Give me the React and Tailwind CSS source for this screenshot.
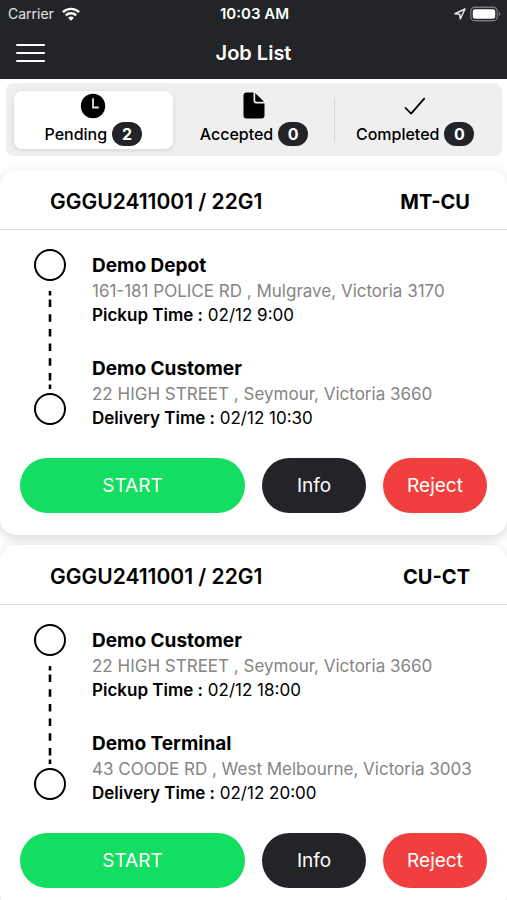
import React, { useState } from "react";

const jobs = [
  {
    container: "GGGU2411001 / 22G1",
    leg: "MT-CU",
    from: { name: "Demo Depot", address: "161-181 POLICE RD , Mulgrave, Victoria 3170", time: "02/12 9:00" },
    to: { name: "Demo Customer", address: "22 HIGH STREET , Seymour, Victoria 3660", time: "02/12 10:30" },
  },
  {
    container: "GGGU2411001 / 22G1",
    leg: "CU-CT",
    from: { name: "Demo Customer", address: "22 HIGH STREET , Seymour, Victoria 3660", time: "02/12 18:00" },
    to: { name: "Demo Terminal", address: "43 COODE RD , West Melbourne, Victoria 3003", time: "02/12 20:00" },
  },
];

function WifiIcon() {
  return (
    <svg width="18" height="14" viewBox="0 0 18 14" fill="none" stroke="white" strokeWidth="2.4" aria-hidden="true">
      <path d="M0.9 5.2a11.6 11.6 0 0 1 16.2 0" />
      <path d="M3.8 8.3a7.5 7.5 0 0 1 10.4 0" />
      <path d="M6.1 10.8a4.2 4.2 0 0 1 5.8 0L9 13.7Z" fill="white" stroke="none" />
    </svg>
  );
}

function LocationIcon() {
  return (
    <svg width="12" height="12" viewBox="0 0 12 12" fill="none" stroke="#e8e8e8" strokeWidth="1.5" strokeLinejoin="round" aria-hidden="true">
      <path d="M11 1 1 5.7l4.7.6.6 4.7Z" />
    </svg>
  );
}

function BatteryIcon() {
  return (
    <svg width="31" height="16" viewBox="0 0 31 16" aria-hidden="true">
      <rect x="0.75" y="1.25" width="26.5" height="13.5" rx="4" fill="none" stroke="#77797b" strokeWidth="1.3" />
      <rect x="2.8" y="3.2" width="22.4" height="9.6" rx="2.2" fill="white" />
      <path d="M28.8 5.6c2 .9 2 3.9 0 4.8Z" fill="#77797b" />
    </svg>
  );
}

function ClockIcon() {
  return (
    <svg width="26" height="26" viewBox="0 0 26 26" aria-hidden="true">
      <circle cx="13" cy="13" r="12.2" fill="black" />
      <path d="M13 5.2v9.300h5.8" fill="none" stroke="#e4e4e4" strokeWidth="1.8" />
    </svg>
  );
}

function DocumentIcon() {
  return (
    <svg width="22" height="27" viewBox="0 0 22 27" aria-hidden="true">
      <path d="M3.5.5H10.5V8.5a3 3 0 0 0 3 3H21.5V23.500a3 3 0 0 1-3 3h-15a3 3 0 0 1-3-3v-20a3 3 0 0 1 3-3Z" fill="black" />
      <path d="M12.200.9 21 9.800h-7.300a1.500 1.500 0 0 1-1.500-1.500Z" fill="black" />
    </svg>
  );
}

function CheckIcon() {
  return (
    <svg width="22" height="26" viewBox="0 0 22 26" fill="none" stroke="black" strokeWidth="1.8" strokeLinecap="round" strokeLinejoin="round" aria-hidden="true">
      <path d="m1.600 15 5.500 5.700L20.200 5.600" />
    </svg>
  );
}

const tabs = [
  { label: "Pending", count: 2, Icon: ClockIcon },
  { label: "Accepted", count: 0, Icon: DocumentIcon },
  { label: "Completed", count: 0, Icon: CheckIcon },
];

function Tab({ tab, selected, divided, onSelect }) {
  const { label, count, Icon } = tab;
  return (
    <div className="flex items-center">
      {divided && <span className="h-11 w-px bg-[#d8d8da]" />}
      <button
        type="button"
        role="tab"
        aria-selected={selected}
        onClick={onSelect}
        className={`mx-px flex h-[58px] flex-1 flex-col items-center justify-between rounded-lg pt-px pb-[3px] ${
          selected ? "bg-white shadow-[0_1px_5px_rgba(0,0,0,0.12)]" : ""
        }`}
      >
        <span className="flex h-[27px] items-center">
          <Icon />
        </span>
        <span className="flex items-center gap-[5px] text-base leading-6 font-medium">
          {label}
          <span className="flex h-6 w-[30px] items-center justify-center rounded-full bg-[#222428] font-bold text-white">
            {count}
          </span>
        </span>
      </button>
    </div>
  );
}

function Stop({ stop, timeLabel }) {
  return (
    <div>
      <h3 className="text-[19px] leading-[27px] font-bold">{stop.name}</h3>
      <p className="text-[17px] leading-6 text-[#858585]">{stop.address}</p>
      <p className="text-[17px] leading-6">
        <strong className="font-semibold">{timeLabel} :</strong> {stop.time}
      </p>
    </div>
  );
}

function RouteLine() {
  return (
    <div className="flex w-8 flex-col items-center" aria-hidden="true">
      <span className="size-8 rounded-full border-2 border-black" />
      <svg width="4" height="112" viewBox="0 0 4 112" stroke="black" strokeWidth="2.600">
        <path d="M2 10v4.500M2 18.500v7.500M2 33.200v7.500M2 47.900v7.500M2 62.600v7.500M2 77.300v7.500M2 92v7.500M2 103.500v4.500" />
      </svg>
      <span className="size-8 rounded-full border-2 border-black" />
    </div>
  );
}

function JobCard({ job }) {
  return (
    <article className="rounded-2xl bg-white pb-[22px] shadow-[0_3px_12px_rgba(0,0,0,0.16)]">
      <header className="flex h-[60px] items-center justify-between border-b border-[#dcdcdc] pt-1 pr-[37px] pl-[50px]">
        <h2 className="text-[21px] font-semibold">{job.container}</h2>
        <span className="text-xl font-bold">{job.leg}</span>
      </header>
      <div className="flex gap-[26px] px-[34px] pt-[19px]">
        <RouteLine />
        <div className="flex flex-col gap-7 pt-[3px]">
          <Stop stop={job.from} timeLabel="Pickup Time" />
          <Stop stop={job.to} timeLabel="Delivery Time" />
        </div>
      </div>
      <div className="mt-7 flex gap-[17px] px-5 text-[19px] text-white">
        <button type="button" className="h-[55px] flex-1 rounded-full bg-[#13de61] pt-0.5">START</button>
        <button type="button" className="h-[55px] w-[104px] rounded-full bg-[#222428] pt-0.5">Info</button>
        <button type="button" className="h-[55px] w-[104px] rounded-full bg-[#f13f40] pt-0.5">Reject</button>
      </div>
    </article>
  );
}

export default function App() {
  const [active, setActive] = useState(0);
  return (
    <div className="flex h-screen flex-col overflow-hidden bg-white font-['Inter','Liberation_Sans',sans-serif] text-black">
      <div className="bg-[#222428] text-white">
        <div className="grid h-7 grid-cols-3 items-center pr-1.5 pl-2 text-sm">
          <span className="flex items-center gap-2 text-[#e4e4e4]">
            Carrier <WifiIcon />
          </span>
          <span className="text-center text-[15px] font-semibold">10:03 AM</span>
          <span className="flex items-center justify-end gap-1">
            <LocationIcon />
            <BatteryIcon />
          </span>
        </div>
        <header className="grid h-[51px] grid-cols-[1fr_auto_1fr] items-center px-4 pb-0.5">
          <button type="button" aria-label="Open menu" className="flex w-[29px] flex-col gap-1.5">
            <span className="h-0.5 rounded-full bg-white" />
            <span className="h-0.5 rounded-full bg-white" />
            <span className="h-0.5 rounded-full bg-white" />
          </button>
          <h1 className="text-xl font-semibold">Job List</h1>
        </header>
      </div>
      <div className="py-1 pr-[5px] pl-1.5">
        <div role="tablist" className="grid grid-cols-3 rounded-lg bg-[#efefef] px-[7px] pt-2 pb-[7px]">
          {tabs.map((tab, i) => (
            <Tab key={tab.label} tab={tab} selected={i === active} divided={i === 2} onSelect={() => setActive(i)} />
          ))}
        </div>
      </div>
      <main className="flex min-h-0 flex-1 flex-col gap-2.5 overflow-y-auto pt-2.5 [scrollbar-width:none]">
        {jobs.map((job) => (
          <JobCard key={job.leg} job={job} />
        ))}
      </main>
    </div>
  );
}
